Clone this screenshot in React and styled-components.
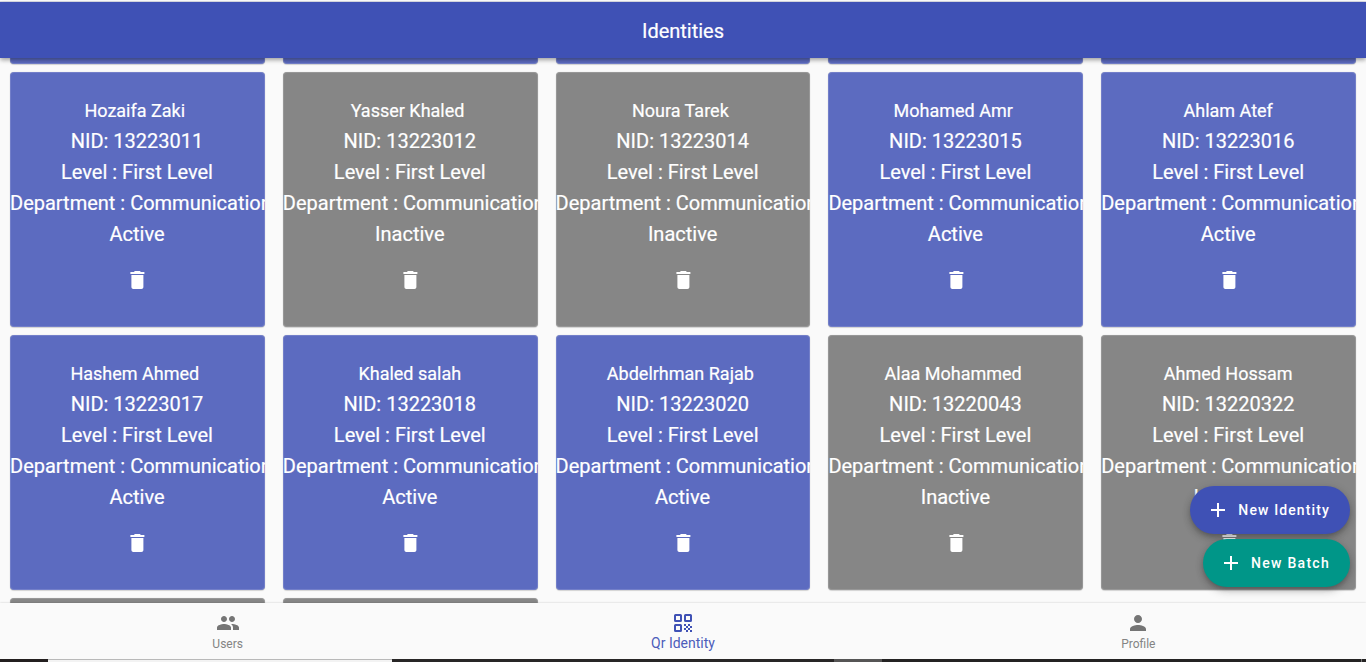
import React from "react";
import styled, { createGlobalStyle, css } from "styled-components";

const GlobalStyle = createGlobalStyle`
  *, *::before, *::after { box-sizing: border-box; }
  body { margin: 0; background: #fafafa; font-family: Roboto, sans-serif; overflow: hidden; }
  button { font: inherit; border: 0; margin: 0; cursor: pointer; }
`;

const Screen = styled.div`
  display: flex;
  flex-direction: column;
  height: 662px;
  overflow: hidden;
  position: relative;
`;

const TopEdge = styled.div`
  height: 2px;
  flex: none;
  background: #fdfdfd;
  border-bottom: 1px solid #dcdde6;
`;

const AppBar = styled.header`
  flex: none;
  height: 56px;
  display: flex;
  align-items: center;
  justify-content: center;
  background: #3f51b5;
  color: #fff;
  z-index: 2;
  box-shadow: 0 2px 4px -1px rgba(0, 0, 0, 0.2), 0 3px 4px rgba(0, 0, 0, 0.14),
    0 1px 6px rgba(0, 0, 0, 0.1);
`;

const Title = styled.h1`
  margin: 0;
  padding-top: 2px;
  font-size: 20px;
  line-height: 24px;
  font-weight: 400;
  -webkit-text-stroke: 0.2px currentColor;
`;

const Content = styled.main`
  flex: 1;
  min-height: 0;
  overflow: hidden;
`;

const Grid = styled.div`
  display: grid;
  grid-template-columns: repeat(5, minmax(0, 1fr));
  grid-auto-rows: 254.8px;
  gap: 8px 18px;
  padding: 0 10px;
  margin-top: -248.4px;
`;

const Card = styled.article`
  display: flex;
  flex-direction: column;
  align-items: center;
  justify-content: center;
  overflow: hidden;
  border-radius: 4px;
  color: #fff;
  background: ${(p) => (p.$active ? "#5c6bc0" : "#868686")};
  box-shadow: inset 0 0 0 1px rgba(255, 255, 255, 0.14),
    0 1px 1px rgba(0, 0, 0, 0.14), 0 0 1px rgba(0, 0, 0, 0.2);
`;

const Line = styled.div`
  flex: none;
  max-width: 100%;
  padding: 4px 0.8px 4px 0;
  font-size: 20px;
  line-height: 23px;
  font-weight: 400;
  white-space: pre;
  -webkit-text-stroke: 0.2px currentColor;
`;

const Name = styled(Line)`
  font-size: 18px;
  line-height: 21px;
  margin-bottom: 1px;
`;

const DeleteButton = styled.button`
  flex: none;
  display: grid;
  place-items: center;
  width: 48px;
  height: 48px;
  margin-top: 6px;
  padding: 0;
  color: #fff;
  background: none;
`;

const Icon = styled.svg`
  display: block;
  flex: none;
  width: 24px;
  height: 24px;
  fill: currentColor;
`;

const Actions = styled.div`
  position: absolute;
  right: 16px;
  bottom: 75px;
  z-index: 3;
  display: flex;
  flex-direction: column;
  align-items: flex-end;
  gap: 5px;
`;

const ExtendedFab = styled.button`
  display: flex;
  align-items: center;
  gap: 8px;
  height: 48px;
  padding: 0 20px 0 16px;
  border-radius: 24px;
  color: #fff;
  background: ${(p) => p.$color};
  font-size: 14px;
  font-weight: 500;
  letter-spacing: ${(p) => p.$tracking}px;
  white-space: nowrap;
  box-shadow: 0 3px 5px -1px rgba(0, 0, 0, 0.2), 0 5px 8px rgba(0, 0, 0, 0.14),
    0 1px 10px rgba(0, 0, 0, 0.1);
`;

const BottomNav = styled.nav`
  flex: none;
  display: flex;
  height: 56px;
  z-index: 2;
  background: #fafafa;
  box-shadow: 0 0 2px rgba(0, 0, 0, 0.2);
`;

const NavLabel = styled.span`
  padding-top: 1px;
  color: #848484;
`;

const NavItem = styled.a`
  flex: 1;
  display: flex;
  flex-direction: column;
  align-items: center;
  padding-top: 8px;
  color: #757575;
  font-size: 12px;
  line-height: 16px;
  ${(p) =>
    p.$selected &&
    css`
      color: #3f51b5;
      font-size: 14px;
      ${NavLabel} {
        padding-top: 0;
        color: #4c5dba;
      }
    `}
`;

const Strip = styled.footer`
  flex: none;
  display: flex;
  height: 3px;
  z-index: 2;
  background: #262424;
`;

const StripPart = styled.div`
  width: ${(p) => p.$width}px;
  background: ${(p) => p.$color};
  ${(p) => p.$edge && "border-top: 1px solid #b9b9b9;"}
`;

const paths = {
  trash: "M6 19c0 1.1.9 2 2 2h8c1.1 0 2-.9 2-2V7H6v12zM19 4h-3.5l-1-1h-5l-1 1H5v2h14V4z",
  add: "M19 13h-6v6h-2v-6H5v-2h6V5h2v6h6v2z",
  users:
    "M16 11c1.66 0 2.99-1.34 2.99-3S17.66 5 16 5c-1.66 0-3 1.34-3 3s1.34 3 3 3zm-8 0c1.66 0 2.99-1.34 2.99-3S9.66 5 8 5C6.34 5 5 6.34 5 8s1.34 3 3 3zm0 2c-2.33 0-7 1.17-7 3.5V19h14v-2.5c0-2.33-4.67-3.5-7-3.5zm8 0c-.29 0-.62.02-.97.05 1.16.84 1.97 1.97 1.97 3.45V19h6v-2.5c0-2.33-4.67-3.5-7-3.5z",
  person:
    "M12 12c2.21 0 4-1.79 4-4s-1.79-4-4-4-4 1.79-4 4 1.79 4 4 4zm0 2c-2.67 0-8 1.34-8 4v2h16v-2c0-2.66-5.33-4-8-4z",
  qr: "M4.5 3h5A1.5 1.5 0 0 1 11 4.5v5A1.5 1.5 0 0 1 9.5 11h-5A1.5 1.5 0 0 1 3 9.500v-5A1.5 1.5 0 0 1 4.500 3zM5 5v4h4V5zM14.500 3h5A1.500 1.500 0 0 1 21 4.500v5a1.500 1.500 0 0 1-1.500 1.500h-5A1.500 1.500 0 0 1 13 9.500v-5A1.500 1.500 0 0 1 14.500 3zM15 5v4h4V5zM4.500 13h5a1.500 1.500 0 0 1 1.500 1.500v5A1.500 1.500 0 0 1 9.500 21h-5A1.500 1.500 0 0 1 3 19.500v-5A1.500 1.500 0 0 1 4.500 13zM5 15v4h4v-4zM13 13h2v2h-2zM17 13h2v2h-2zM15 15h2v2h-2zM19 15h2v2h-2zM13 17h2v2h-2zM17 17h2v2h-2zM15 19h2v2h-2zM19 19h2v2h-2z",
};

const Glyph = ({ name, offset = 0 }) => (
  <Icon viewBox={`${-offset} 0 24 24`} aria-hidden="true">
    <path fillRule="evenodd" d={paths[name]} />
  </Icon>
);

const identities = [
  ["Hozaifa Zaki ", "13223011", true],
  ["Yasser Khaled ", "13223012", false],
  ["Noura Tarek ", "13223014", false],
  ["Mohamed Amr ", "13223015", true],
  ["Ahlam Atef", "13223016", true],
  ["Hashem Ahmed ", "13223017", true],
  ["Khaled salah", "13223018", true],
  ["Abdelrhman Rajab ", "13223020", true],
  ["Alaa Mohammed ", "13220043", false],
  ["Ahmed Hossam", "13220322", false],
];

const IdentityCard = ({ name, nid, active }) => (
  <Card $active={active}>
    <Name>{name}</Name>
    <Line>NID: {nid}</Line>
    <Line>Level : First Level</Line>
    <Line>Department : Communication</Line>
    <Line>{active ? "Active" : "Inactive"}</Line>
    <DeleteButton aria-label="Delete">
      <Glyph name="trash" offset={0.4} />
    </DeleteButton>
  </Card>
);

export default function App() {
  return (
    <>
      <GlobalStyle />
      <Screen>
        <TopEdge />
        <AppBar>
          <Title>Identities</Title>
        </AppBar>
        <Content>
          <Grid>
            {[0, 1, 2, 3, 4].map((i) => (
              <Card key={i} $active />
            ))}
            {identities.map(([name, nid, active]) => (
              <IdentityCard key={nid} name={name} nid={nid} active={active} />
            ))}
            <Card />
            <Card />
          </Grid>
        </Content>
        <Actions>
          <ExtendedFab $color="#3f51b5" $tracking={1.12}>
            <Glyph name="add" />
            New Identity
          </ExtendedFab>
          <ExtendedFab $color="#009688" $tracking={1.28}>
            <Glyph name="add" />
            New Batch
          </ExtendedFab>
        </Actions>
        <BottomNav>
          <NavItem>
            <Glyph name="users" />
            <NavLabel>Users</NavLabel>
          </NavItem>
          <NavItem $selected>
            <Glyph name="qr" />
            <NavLabel>Qr Identity</NavLabel>
          </NavItem>
          <NavItem>
            <Glyph name="person" />
            <NavLabel>Profile</NavLabel>
          </NavItem>
        </BottomNav>
        <Strip>
          <StripPart $width={48} $color="#231f1f" />
          <StripPart $width={344} $color="#f3f3f3" $edge />
          <StripPart $width={442} $color="#282626" />
          <StripPart $width={48} $color="#565555" />
          <StripPart $width={479} $color="#242323" />
          <StripPart $width={1} $color="#777" />
        </Strip>
      </Screen>
    </>
  );
}
